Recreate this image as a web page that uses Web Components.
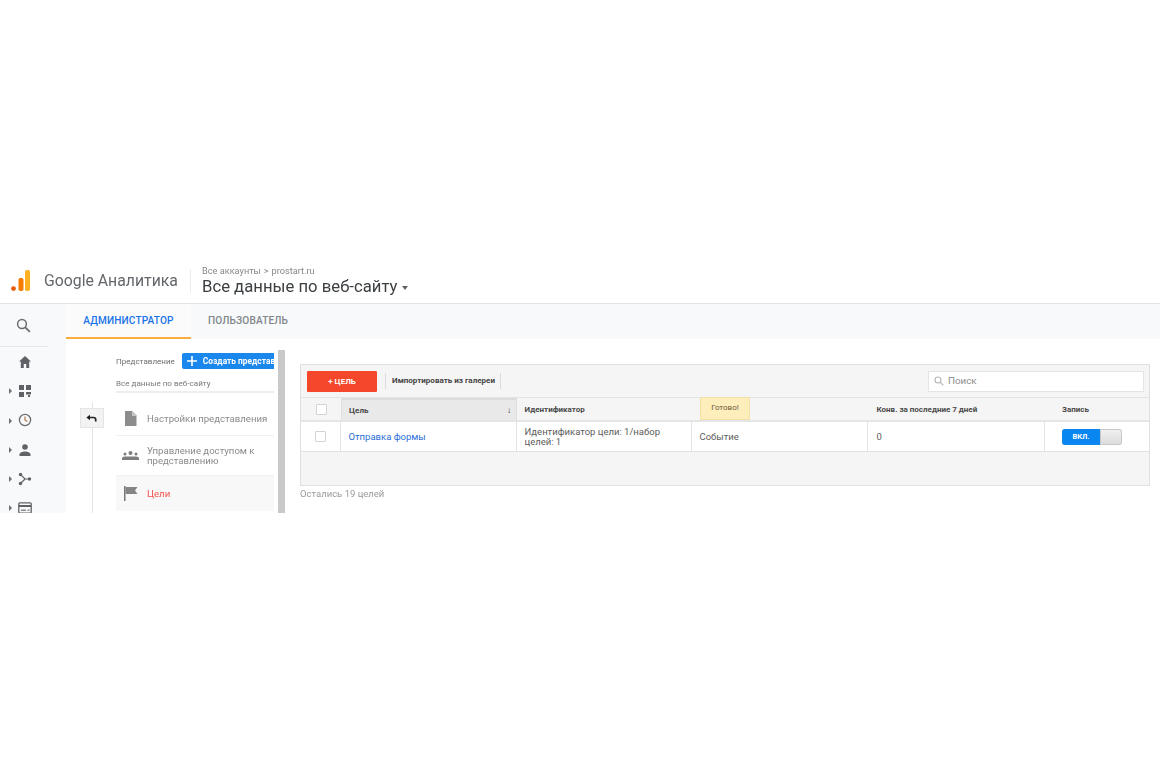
<!DOCTYPE html>
<html lang="ru">
<head>
<meta charset="utf-8">
<title>Google Аналитика</title>
<style>
html, body { margin: 0; background: #fff; }
body { font-family: Roboto, "Noto Sans", sans-serif; color: #555; }
</style>
</head>
<body>
<ga-app>
  <ga-header slot="header"></ga-header>
  <ga-rail slot="rail"></ga-rail>
  <ga-tabs slot="tabs"></ga-tabs>
  <ga-view-menu slot="menu"></ga-view-menu>
  <ga-goals slot="goals"></ga-goals>
</ga-app>

<script>
class GaApp extends HTMLElement {
    constructor(){
        super();
        this.attachShadow({mode: "open"});
        this.shadowRoot.innerHTML = `
        <style>
            :host { display: block; margin-top: 258px; height: 255px; overflow: hidden; filter: blur(.45px); }
            .body { display: flex; height: 209px; }
            .main { flex: 1; min-width: 0; display: flex; flex-direction: column; }
            .content { flex: 1; display: flex; min-height: 0; }
        </style>
        <slot name="header"></slot>
        <div class="body">
            <slot name="rail"></slot>
            <div class="main">
                <slot name="tabs"></slot>
                <div class="content">
                    <slot name="menu"></slot>
                    <slot name="goals"></slot>
                </div>
            </div>
        </div>`;
    }
}

class GaHeader extends HTMLElement {
    constructor(){
        super();
        this.attachShadow({mode: "open"});
        this.shadowRoot.innerHTML = `
        <style>
            :host { display: flex; align-items: center; height: 46px; box-sizing: border-box; border-bottom: 1px solid #e2e3e5; padding-left: 11px; }
            svg { width: 20px; height: 22px; flex: none; margin-top: 1px; }
            .brand { font-size: 15.800px; color: #63676b; margin-left: 13px; white-space: nowrap; width: 146px; flex: none; }
            .sep { width: 1px; height: 24px; background: #ececec; margin-right: 11px; flex: none; }
            .crumbs { font-size: 9.200px; color: #85888b; line-height: 12px; display: flex; align-items: center; gap: 3px; }
            .title { font-size: 16.700px; color: #3c4043; line-height: 20px; display: flex; align-items: center; gap: 5px; white-space: nowrap; }
            .caret { width: 0; height: 0; border: 3.500px solid transparent; border-top: 4px solid #5f6368; border-bottom: 0; margin-top: 3px; }
        </style>
        <svg viewBox="0 0 20 22">
            <rect x="14" y="0" width="5" height="21" rx="1.800" fill="#fdb022"/>
            <rect x="7.500" y="8" width="5" height="13" rx="1.800" fill="#f57c00"/>
            <circle cx="2.500" cy="18.600" r="2.400" fill="#e8590c"/>
        </svg>
        <div class="brand">Google Аналитика</div>
        <div class="sep"></div>
        <div class="view">
            <div class="crumbs">Все аккаунты <span>&gt;</span> prostart.ru</div>
            <div class="title">Все данные по веб-сайту <span class="caret"></span></div>
        </div>`;
    }
}

class GaRail extends HTMLElement {
    constructor(){
        super();
        this.attachShadow({mode: "open"});
        const items = [
            `<path d="M7 1 1 6.500h1.800V13h3V9h2.400v4h3V6.500H13z" fill="#5f6368"/>`,
            `<path d="M1 1h5v5H1zM8 1h5v5H8zM1 8h5v5H1zM8 8h5v2.500H8zM10 11h2v2h-2z" fill="#5f6368"/>`,
            `<circle cx="7" cy="7" r="5.600" fill="none" stroke="#6b6b6b" stroke-width="1.300"/><path d="M7 3.600V7l2.400 1.600" fill="none" stroke="#b5764a" stroke-width="1.200"/>`,
            `<circle cx="7" cy="4" r="2.800" fill="#5f6368"/><path d="M1.500 13v-1.500C1.500 9.500 4.500 8.500 7 8.500s5.500 1 5.500 3V13z" fill="#5f6368"/>`,
            `<circle cx="2.500" cy="2.500" r="1.700" fill="#5f6368"/><circle cx="2.500" cy="11.500" r="1.700" fill="#5f6368"/><circle cx="11.500" cy="7" r="1.700" fill="#5f6368"/><path d="M2.500 2.500 7 7h4.500M7 7l-4.500 4.500" fill="none" stroke="#5f6368" stroke-width="1.200"/>`,
            `<rect x=".8" y="1.800" width="12.400" height="10.400" rx="1" fill="none" stroke="#5f6368" stroke-width="1.300"/><path d="M1 4h12v2H1z" fill="#5f6368"/><path d="M3 8.500h5v1.500H3zM9.500 8.500h2v1.500h-2z" fill="#8a8a8a"/>`
        ];
        const rows = items.map((d, i) => `
            <div class="item">
                ${i ? '<span class="arrow"></span>' : ''}
                <svg viewBox="0 0 14 14">${d}</svg>
            </div>`).join('');
        this.shadowRoot.innerHTML = `
        <style>
            :host { display: block; width: 66px; flex: none; background: #f8f9fa; }
            .search { height: 42px; display: flex; align-items: center; padding-left: 16px; box-sizing: border-box; }
            .search svg { width: 15px; height: 15px; }
            .rule { height: 1px; background: #e6e7e8; width: 48px; }
            .item { position: relative; height: 29.300px; display: flex; align-items: center; padding-left: 18px; }
            .item svg { width: 14px; height: 14px; }
            .arrow { position: absolute; left: 9px; top: 12px; width: 0; height: 0; border: 3px solid transparent; border-left: 3.500px solid #6b6f73; border-right: 0; }
        </style>
        <div class="search">
            <svg viewBox="0 0 15 15"><circle cx="6" cy="6" r="4.400" fill="none" stroke="#6a6d70" stroke-width="1.500"/><path d="m9.300 9.300 4.500 4.500" stroke="#6a6d70" stroke-width="1.800"/></svg>
        </div>
        <div class="rule"></div>
        <div class="list">${rows}</div>`;
    }
}

class GaTabs extends HTMLElement {
    constructor(){
        super();
        this.attachShadow({mode: "open"});
        this.shadowRoot.innerHTML = `
        <style>
            :host { display: flex; height: 35px; background: #f8f9fa; flex: none; }
            .tab { font-size: 10.100px; font-weight: 500; letter-spacing: .15px; line-height: 34px; white-space: nowrap; box-sizing: border-box; height: 35px; }
            .on { width: 125px; text-align: center; color: #1a73e8; border-bottom: 2px solid #fbac3f; background: #fbfbfb; }
            .off { color: #80868b; margin-left: 17px; }
        </style>
        <div class="tab on">АДМИНИСТРАТОР</div>
        <div class="tab off">ПОЛЬЗОВАТЕЛЬ</div>`;
    }
}

class GaViewMenu extends HTMLElement {
    constructor(){
        super();
        this.attachShadow({mode: "open"});
        this.shadowRoot.innerHTML = `
        <style>
            :host { display: block; width: 219px; flex: none; position: relative; box-sizing: border-box; padding: 14px 11px 0 50px; height: 174px; overflow: hidden; }
            .top { display: flex; align-items: center; gap: 7px; height: 16px; font-size: 8.050px; color: #6f6f6f; white-space: nowrap; width: 158px; overflow: hidden; }
            .create { background: #1a87ec; color: #fff; height: 16px; flex: none; width: 92px; overflow: hidden; display: flex; align-items: center; font-weight: 700; font-size: 8.400px; border-radius: 2px 0 0 2px; }
            .create svg { width: 10px; height: 10px; margin: 0 6px 0 5px; flex: none; }
            .name { font-size: 8.080px; color: #7a7a7a; margin-top: 8px; height: 14px; line-height: 14px; border-bottom: 2px solid #eee; width: 158px; white-space: nowrap; box-sizing: content-box; }
            .scroll { position: absolute; left: 212px; top: 11px; bottom: 0; width: 7px; background: #c9c9c9; }
            .line { position: absolute; left: 25.500px; top: 63px; bottom: 0; width: 1.500px; background: #e4e4e4; }
            .back { position: absolute; left: 14px; top: 69px; width: 22px; height: 18px; background: #f3f3f3; border: 1px solid #e4e4e4; display: flex; align-items: center; justify-content: center; box-sizing: content-box; }
            .back svg { width: 12px; height: 9px; margin-left: -3px; }
            .row { display: flex; align-items: center; width: 158px; border-bottom: 1px solid #f0f0f0; font-size: 9.600px; line-height: 10px; color: #8a8a8a; box-sizing: border-box; white-space: nowrap; }
            .row svg { width: 17px; height: 17px; flex: none; margin: 0 8px 0 6px; }
            .a { height: 42px; padding-top: 8px; margin-top: 1px; }
            .b { height: 40px; }
            .c { height: 35px; background: #f8f8f8; color: #f4524d; border-bottom: 0; }
        </style>
        <div class="line"></div>
        <div class="back">
            <svg viewBox="0 0 12 9"><path d="M5 .8 1.300 3.500 5 6.200z" fill="#222"/><path d="M3 3.500h5.500q2.200 0 2.200 2V7.500" fill="none" stroke="#222" stroke-width="1.700"/></svg>
        </div>
        <div class="top">Представление
            <div class="create">
                <svg viewBox="0 0 10 10"><path d="M5 0v10M0 5h10" stroke="#fff" stroke-width="1.600"/></svg>Создать представление
            </div>
        </div>
        <div class="name">Все данные по веб-сайту</div>
        <div class="row a">
            <svg viewBox="0 0 17 17"><path d="M3 1h7l4.500 4.500V16H3z" fill="#8d8d8d"/><path d="M10 1v5h4.500z" fill="#c7c7c7"/></svg>
            <span>Настройки представления</span>
        </div>
        <div class="row b">
            <svg viewBox="0 0 17 17"><circle cx="3" cy="7" r="1.500" fill="#7d7d7d"/><circle cx="8.500" cy="6" r="2" fill="#7d7d7d"/><circle cx="14" cy="7" r="1.500" fill="#7d7d7d"/><path d="M0 13v-1.500Q0 9.500 3 9.500h11q3 0 3 2V13z" fill="#7d7d7d"/></svg>
            <span>Управление доступом к<br>представлению</span>
        </div>
        <div class="row c">
            <svg viewBox="0 0 17 17"><path d="M2 1h1.500v15H2z" fill="#777"/><path d="M3.500 2h12l-2.500 3.500 2.500 3.500h-12z" fill="#858585"/></svg>
            <span>Цели</span>
        </div>
        <div class="scroll"></div>`;
    }
}

class GaToggle extends HTMLElement {
    constructor(){
        super();
        this.attachShadow({mode: "open"});
        this.shadowRoot.innerHTML = `
        <style>
            :host { display: flex; width: 60px; height: 16px; border-radius: 3px; overflow: hidden; box-shadow: 0 0 0 1px #cfcfcf inset; }
            .on { width: 38px; background: #0a86f0; color: #fff; font-size: 7.500px; font-weight: 700; text-align: center; line-height: 16px; }
            .off { flex: 1; background: linear-gradient(#f0f0f0, #dcdcdc); border: 1px solid #c8c8c8; border-radius: 0 3px 3px 0; }
        </style>
        <div class="on"><slot></slot></div>
        <div class="off"></div>`;
    }
}

class GaCheck extends HTMLElement {
    constructor(){
        super();
        this.attachShadow({mode: "open"});
        this.shadowRoot.innerHTML = `
        <style>
            :host { display: block; width: 9px; height: 9px; background: #fff; border: 1px solid #d4d4d4; border-radius: 1px; }
        </style>`;
    }
}

class GaGoals extends HTMLElement {
    constructor(){
        super();
        this.attachShadow({mode: "open"});
        this.shadowRoot.innerHTML = `
        <style>
            :host { display: block; margin: 25px 10px 0 15px; flex: 1; min-width: 0; position: relative; font-size: 9.500px; color: #5c5c5c; }
            .panel { border: 1px solid #e0e0e0; background: #f5f5f5; }
            .bar { display: flex; align-items: center; height: 33px; box-sizing: border-box; padding: 0 5px 0 6px; border-bottom: 1px solid #e3e3e3; }
            .add { width: 70px; height: 21px; background: #f4472c; color: #fff; font-size: 8px; font-weight: 700; text-align: center; line-height: 21px; border-radius: 1px; flex: none; }
            .import { border-left: 1px solid #dcdcdc; border-right: 1px solid #dcdcdc; margin-left: 8px; padding: 0 5px 0 6px; height: 16px; line-height: 16px; font-size: 8.050px; font-weight: 700; color: #444; white-space: nowrap; }
            .search { margin-left: auto; width: 216px; height: 21px; box-sizing: border-box; background: #fff; border: 1px solid #e4e4e4; display: flex; align-items: center; gap: 4px; padding-left: 5px; color: #8c8c8c; font-size: 9.800px; line-height: 18px; }
            .search svg { width: 10px; height: 10px; }
            .grid { display: grid; grid-template-columns: 40px 176px 175px 176px 177px 1fr; }
            .head, .data { display: contents; }
            .h, .cell { display: flex; align-items: center; box-sizing: border-box; padding-left: 7.500px; }
            .h { height: 24px; font-size: 8px; font-weight: 700; color: #4a4a4a; border-bottom: 2px solid #e5e5e5; background: #f5f5f5; white-space: nowrap; }
            .h.sorted { background: #e9e9e9; border-top: 2px solid #dcdcdc; border-left: 1px solid #e0e0e0; border-right: 1px solid #e0e0e0; justify-content: space-between; padding: 0 5px 0 7px; }
            .cell { height: 30px; background: #fff; border-bottom: 1px solid #e0e0e0; border-right: 1px solid #e4e4e4; line-height: 10px; }
            .cell:last-child { border-right: 0; }
            .h.chk, .cell.chk { justify-content: center; padding: 0; }
            .conv { padding-left: 8.500px; }
            .rec { padding-left: 17px; }
            a { color: #2a6fd6; text-decoration: none; }
            .foot { height: 33px; background: #f5f5f5; }
            .left { color: #9a9a9a; margin-top: 2px; line-height: 12px; }
            .tip { position: absolute; left: 400px; top: 33px; width: 50px; height: 23px; box-sizing: border-box; background: #fdeebb; border: 1px solid #f2e0a6; font-size: 8px; color: #6e5a3c; text-align: center; line-height: 20px; }
            .sortdown { font-size: 8px; color: #222; font-weight: 700; }
        </style>
        <div class="panel">
            <div class="bar">
                <div class="add">+ ЦЕЛЬ</div>
                <div class="import">Импортировать из галереи</div>
                <div class="search">
                    <svg viewBox="0 0 10 10"><circle cx="4" cy="4" r="3" fill="none" stroke="#b5b5b5" stroke-width="1.100"/><path d="m6.300 6.300 3 3" stroke="#b5b5b5" stroke-width="1.200"/></svg>
                    Поиск
                </div>
            </div>
            <div class="grid">
                <div class="head">
                    <div class="h chk"><ga-check></ga-check></div>
                    <div class="h sorted">Цель <span class="sortdown">↓</span></div>
                    <div class="h">Идентификатор</div>
                    <div class="h"></div>
                    <div class="h conv">Конв. за последние 7 дней</div>
                    <div class="h rec">Запись</div>
                </div>
                <div class="data">
                    <div class="cell chk"><ga-check></ga-check></div>
                    <div class="cell"><a href="#">Отправка формы</a></div>
                    <div class="cell">Идентификатор цели: 1/набор<br>целей: 1</div>
                    <div class="cell">Событие</div>
                    <div class="cell conv">0</div>
                    <div class="cell rec"><ga-toggle>ВКЛ.</ga-toggle></div>
                </div>
            </div>
            <div class="foot"></div>
        </div>
        <div class="left">Остались 19 целей</div>
        <div class="tip">Готово!</div>`;
    }
}

customElements.define('ga-app', GaApp);
customElements.define('ga-header', GaHeader);
customElements.define('ga-rail', GaRail);
customElements.define('ga-tabs', GaTabs);
customElements.define('ga-view-menu', GaViewMenu);
customElements.define('ga-toggle', GaToggle);
customElements.define('ga-check', GaCheck);
customElements.define('ga-goals', GaGoals);
</script>
</body>
</html>
